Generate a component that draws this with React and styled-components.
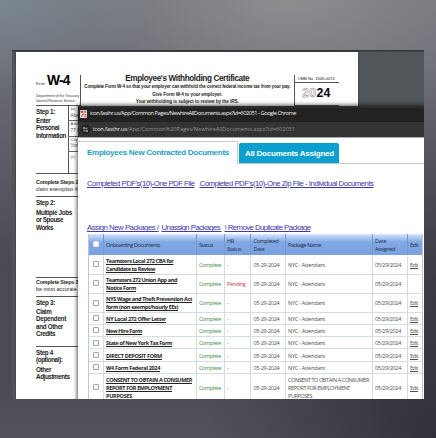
import React, { useLayoutEffect, useRef, useState } from "react";
import styled, { createGlobalStyle, css } from "styled-components";

const Global = createGlobalStyle`
  * { box-sizing: border-box; }
  html, body { margin: 0; padding: 0; }
  body { font-family: "Liberation Sans", Arial, sans-serif; color: #1c1c1c; overflow: hidden; }
`;

const Backdrop = styled.main`
  width: 436px;
  height: 438px;
  padding: 50px 12px 39px;
  overflow: hidden;
  background:
    radial-gradient(ellipse 210px 130px at 290px 0, rgba(157, 157, 156, 0.6), transparent),
    radial-gradient(ellipse 150px 90px at 0 0, rgba(128, 146, 156, 0.6), transparent),
    radial-gradient(ellipse 230px 170px at 436px 438px, rgba(40, 39, 49, 0.75), transparent),
    radial-gradient(ellipse 90px 200px at 436px 290px, rgba(50, 48, 59, 0.6), transparent),
    linear-gradient(180deg, #74767d 0, #6d6e77 60px, #5d5e69 150px, #4a4a55 260px, #4b4a55 380px, #53535d 438px);
`;

const Viewer = styled.section`
  position: relative;
  height: 349px;
  padding: 2px 0 0 4px;
  overflow: hidden;
  background: linear-gradient(#35383b 0, #35383b 1px, #50565a 2px);
`;

const Paper = styled.article`
  width: 342px;
  height: 347px;
  padding: 23px 20px 0;
  background: #fff;
  box-shadow: 0 0 2px #333;
`;

const Text = styled.span`
  display: block;
  width: max-content;
  white-space: pre;
  font-family: ${(p) => p.$font || "inherit"};
  font-size: ${(p) => p.$size}px;
  font-weight: ${(p) => (p.$bold ? 700 : 400)};
  line-height: ${(p) => p.$lh || 7.3}px;
  margin-top: ${(p) => p.$mt || 0}px;
  color: ${(p) => p.$color || "inherit"};
  ${(p) => p.$underline && css`text-decoration: underline; text-decoration-thickness: 0.7px; text-underline-offset: 1px;`}
`;

// Tracks a line of text so that it spans the given measure.
function Fit({ w, children, ...rest }) {
  const ref = useRef(null);
  const [tracking, setTracking] = useState(0);
  useLayoutEffect(() => {
    if (!w) return;
    const natural = ref.current.getBoundingClientRect().width;
    setTracking((w - natural) / children.length);
  }, []);
  return (
    <Text ref={ref} style={{ letterSpacing: `${tracking}px` }} {...rest}>
      {children}
    </Text>
  );
}

const FormHead = styled.header`
  display: grid;
  grid-template-columns: 45px 212.5px 45px;
  height: 31px;
`;
const FormName = styled.div`
  border-right: 1px solid #555;
  border-bottom: 1px solid #555;
`;
const NameRow = styled.div`
  display: flex;
  align-items: flex-end;
  gap: 2px;
  height: 19px;
  padding-bottom: 8px;
`;
const FormTitle = styled.div`
  display: flex;
  flex-direction: column;
  align-items: center;
`;
const FormYear = styled.div`
  border-left: 1px solid #555;
  border-bottom: 1px solid #555;
`;
const Omb = styled.div`
  height: 8px;
  padding-left: 3px;
  border-bottom: 1px solid #555;
`;
const Year = styled.div`
  display: flex;
  align-items: center;
  height: 21px;
  padding-left: 7.5px;
  font-size: 12.3px;
  font-weight: 700;
  line-height: 21px;
  letter-spacing: 0.35px;
  color: #000;
`;
const Outline = styled.span`
  color: #fff;
  -webkit-text-stroke: 0.45px #777;
`;
const Step = styled.section`
  width: 302px;
  height: ${(p) => p.$h}px;
  border-bottom: ${(p) => (p.$open ? "none" : "1px solid #555")};
  padding-top: ${(p) => p.$pt || 2}px;
`;
const StepOne = styled(Step)`
  display: grid;
  grid-template-columns: 32px 1fr;
  padding-top: 0;
`;
const Labels = styled.div`
  padding-top: 1.5px;
`;
const Fields = styled.div`
  border-left: 1px solid #555;
`;
const Field = styled.div`
  height: 15.3px;
  padding-left: 1.5px;
  border-bottom: ${(p) => (p.$last ? "none" : "1px solid #666")};
`;

const Popup = styled.section`
  position: absolute;
  left: 66px;
  top: 56px;
  width: 346px;
  height: 293px;
  overflow: hidden;
  background: #fff;
`;
const PopupShadow = styled.div`
  position: absolute;
  left: 66px;
  top: 56px;
  width: 346px;
  height: 310px;
  box-shadow: 0 0 4px 1px rgba(0, 0, 0, 0.65);
`;
const TitleBar = styled.div`
  display: flex;
  align-items: center;
  gap: 3px;
  height: 16px;
  padding: 0 0 0 2px;
  background: linear-gradient(#303030 0, #222 3px);
`;
const AddressBar = styled.div`
  display: flex;
  align-items: center;
  gap: 3px;
  height: 15px;
  padding-left: 3px;
  background: #333;
`;
const AddressText = styled.div`
  display: flex;
`;
const Tabs = styled.nav`
  display: flex;
  align-items: flex-end;
  height: 27px;
  padding-top: 4px;
  border-top: 1px solid #aaa;
  background: #fff;
`;
const TabActive = styled.div`
  display: flex;
  align-items: center;
  width: 160px;
  height: 23px;
  padding-left: 9px;
  border: solid #c4c7ca;
  border-width: 1px 1px 0 0;
  border-radius: 0 2px 0 0;
`;
const TabRest = styled.div`
  flex: 1;
  height: 23px;
  padding: 2px 0 0 1px;
  border-bottom: 1px solid #c4c7ca;
`;
const TabBlue = styled.div`
  display: flex;
  align-items: center;
  width: 100px;
  height: 20px;
  padding: 1px 0 0 6px;
  border-radius: 2px 2px 0 0;
  background: #0a9fcf;
`;
const Links = styled.div`
  display: flex;
  gap: ${(p) => p.$gap}px;
  margin: ${(p) => p.$mt}px 0 0 9px;
  height: 10px;
`;
const Table = styled.div`
  width: 335px;
  margin: 1px 0 0 9.5px;
  border-left: 1px solid #b9c7d9;
  border-right: 1px solid #b9c7d9;
  font-family: "Open Sans", "Noto Sans", sans-serif;
`;
const Row = styled.div`
  display: grid;
  grid-template-columns: 15px 93px 28px 26.5px 34.5px 87px 35px 1fr;
  height: ${(p) => p.$h}px;
  color: #505050;
  ${(p) => p.$head && css`
    color: #1d2c49;
    background: linear-gradient(#dce8fb 0, #b5cdf4 3px, #82a9e4 8px, #7aa1df 100%);
  `}
`;
const Cell = styled.div`
  display: flex;
  flex-direction: column;
  justify-content: center;
  align-items: ${(p) => (p.$center ? "center" : "flex-start")};
  padding-left: ${(p) => (p.$center ? 0 : 2.5)}px;
  padding-top: ${(p) => (p.$center ? 1.5 : 3)}px;
  min-width: 0;
  border-right: 1px solid ${(p) => (p.$head ? "#709bd0" : "#d3dde1")};
  border-bottom: 1px solid ${(p) => (p.$head ? "#7aa1df" : "#d5dfe2")};
  &:last-child { border-right: 0; }
`;
const Check = styled.span`
  width: 6px;
  height: 6px;
  border: 1px solid ${(p) => (p.$head ? "#e4e4e4" : "#a2a2a2")};
  border-radius: 1px;
  background: #fff;
  margin-top: -2px;
`;

const Favicon = () => (
  <svg width="7" height="8" viewBox="0 0 7 8">
    <rect width="7" height="8" rx="0.7" fill="#e9ddd8" />
    <rect x="0.5" y="0.8" width="2.5" height="2" fill="#c44b3d" />
    <rect x="3.7" y="0.8" width="2.5" height="2" fill="#9a8a86" />
    <path d="M1 7L3 3.6L4.2 5.2L6 4.2" stroke="#d0553e" strokeWidth="1" fill="none" />
    <rect x="4.4" y="5.5" width="2" height="1.7" fill="#d9765c" />
  </svg>
);
const SiteIcon = () => (
  <svg width="9" height="9" viewBox="0 0 9 9">
    <circle cx="4.5" cy="4.5" r="4.5" fill="#1f1f1f" />
    <path d="M4.1 3.2H6.6M2.2 5.9H4.7" stroke="#ddd" strokeWidth="0.8" />
    <circle cx="2.9" cy="3.2" r="0.8" fill="none" stroke="#ddd" strokeWidth="0.7" />
    <circle cx="5.9" cy="5.9" r="0.8" fill="none" stroke="#ddd" strokeWidth="0.7" />
  </svg>
);

const HEAD = [
  [["Onboarding Documents", 54]],
  [["Status", 14]],
  [["HR", 7], ["Status", 14]],
  [["Completed", 25], ["Date", 11]],
  [["Package Name", 33]],
  [["Date", 11], ["Assigned", 20]],
  [["Edit", 8.5]],
];

const NYC = [["NYC - Attendant", 37]];
const ROWS = [
  { h: 19, doc: [["Teamsters Local 272 CBA for", 67.5], ["Candidate to Review", 49]] },
  { h: 19.5, doc: [["Teamsters 272 Union App and", 71], ["Notice Form", 30]], hr: "Pending", noEdit: true },
  { h: 19, doc: [["NYS Wage and Theft Prevention Act", 86], ["form (non exempt/hourly EEs)", 72]] },
  { h: 12.5, doc: [["NY Local 272 Offer Letter", 60]] },
  { h: 12.2, doc: [["New Hire Form", 36]] },
  { h: 12.3, doc: [["State of New York Tax Form", 66]] },
  { h: 12.3, doc: [["DIRECT DEPOSIT FORM", 56]] },
  { h: 12.3, doc: [["W4 Form Federal 2024", 54]] },
  {
    h: 27,
    doc: [["CONSENT TO OBTAIN A CONSUMER", 86], ["REPORT FOR EMPLOYMENT", 66], ["PURPOSES", 26]],
    pkg: [["CONSENT TO OBTAIN A CONSUMER", 81], ["REPORT FOR EMPLOYMENT", 62], ["PURPOSES", 24]],
  },
];

const Lines = ({ items, ...rest }) =>
  items.map(([text, w]) => (
    <Fit key={text} w={w} $size={5.5} $lh={7.8} {...rest}>{text}</Fit>
  ));

const label = { $size: 6.3, $bold: true, $lh: 7.4 };
const tiny = { $size: 4, $lh: 6.8, $color: "#555" };
const link = { $size: 7.8, $lh: 10, $color: "#3f38a8", $underline: true };

export default function App() {
  return (
    <>
      <Global />
      <Backdrop>
        <Viewer>
          <Paper>
            <FormHead>
              <FormName>
                <NameRow>
                  <Fit w={9} $size={3.5} $lh={4}>Form</Fit>
                  <Fit w={22.5} $size={13.8} $bold $lh={11} $color="#000">W-4</Fit>
                </NameRow>
                <Fit w={43} $size={3.8} $lh={5.2} $color="#444">Department of the Treasury</Fit>
                <Fit w={39} $size={3.8} $lh={5.2} $color="#444">Internal Revenue Service</Fit>
              </FormName>
              <FormTitle>
                <Fit w={124} $size={8.2} $bold $lh={8}>Employee's Withholding Certificate</Fit>
                <Fit w={206} $size={4.6} $bold $lh={7.5}>Complete Form W-4 so that your employer can withhold the correct federal income tax from your pay.</Fit>
                <Fit w={70} $size={4.6} $bold $lh={7.5}>Give Form W-4 to your employer.</Fit>
                <Fit w={103} $size={4.6} $bold $lh={7.5}>Your withholding is subject to review by the IRS.</Fit>
              </FormTitle>
              <FormYear>
                <Omb><Fit w={37} $size={4.2} $lh={7.5}>OMB No. 1545-0074</Fit></Omb>
                <Year><Outline>20</Outline><span>24</span></Year>
              </FormYear>
            </FormHead>
            <StepOne $h={68}>
              <Labels>
                <Fit w={19} {...label}>Step 1:</Fit>
                <Fit w={14.5} {...label} $mt={2}>Enter</Fit>
                <Fit w={23} {...label}>Personal</Fit>
                <Fit w={30} {...label}>Information</Fit>
              </Labels>
              <Fields>
                <Field><Text {...tiny}>(a)</Text><Text {...tiny} $size={4.6}>Abel</Text></Field>
                <Field><Text {...tiny}>Addr</Text><Text {...tiny} $size={4.6}>77 La</Text></Field>
                <Field><Text {...tiny}>City o</Text><Text {...tiny} $size={4.6}>York</Text></Field>
                <Field $last><Text {...tiny} $lh={9}>(c)</Text></Field>
              </Fields>
            </StepOne>
            <Step $h={23} $pt={5}>
              <Fit w={45} $size={5.4} $bold $lh={7}>Complete Steps 2–</Fit>
              <Fit w={45} $size={5.2} $lh={7}>claim exemption fro</Fit>
            </Step>
            <Step $h={81}>
              <Fit w={19} {...label}>Step 2:</Fit>
              <Fit w={36} {...label} $mt={2.3}>Multiple Jobs</Fit>
              <Fit w={27} {...label}>or Spouse</Fit>
              <Fit w={17} {...label}>Works</Fit>
            </Step>
          </Paper>
          <LowerForm />
          <PopupShadow />
          <Popup>
            <TitleBar>
              <Favicon />
              <Fit w={206} $size={5.7} $font={'"Open Sans", sans-serif'} $color="#eee">icon.fasthr.us/App/Common Pages/NewhireAllDocuments.aspx?id=602051 - Google Chrome</Fit>
            </TitleBar>
            <AddressBar>
              <SiteIcon />
              <AddressText>
                <Fit w={34} $size={5.7} $font={'"Open Sans", sans-serif'} $color="#eee">icon.fasthr.us</Fit>
                <Fit w={168} $size={5.7} $font={'"Open Sans", sans-serif'} $color="#929292">/App/Common%20Pages/NewhireAllDocuments.aspx?id=602051</Fit>
              </AddressText>
            </AddressBar>
            <Tabs>
              <TabActive><Fit w={142} $size={8} $bold $lh={10} $color="#1e9fc0">Employees New Contracted Documents</Fit></TabActive>
              <TabRest><TabBlue><Fit w={89} $size={8} $bold $lh={10} $color="#fff">All Documents Assigned</Fit></TabBlue></TabRest>
            </Tabs>
            <Links $mt={14.5} $gap={5}>
              <Fit w={107.5} {...link}>Completed PDF's(10)-One PDF File</Fit>
              <Fit w={174} {...link}>Completed PDF's(10)-One Zip File - Individual Documents</Fit>
            </Links>
            <Links $mt={34.8} $gap={3}>
              <Fit w={71.5} {...link}>Assign New Packages /</Fit>
              <Fit w={60} {...link}>Unassign Packages </Fit>
              <Fit w={86} {...link}>! Remove Duplicate Package</Fit>
            </Links>
            <Table>
              <Row $head $h={20.7}>
                <Cell $center $head><Check $head /></Cell>
                {HEAD.map((items, i) => <Cell $head key={i}><Lines items={items} /></Cell>)}
              </Row>
              {ROWS.map((r) => (
                <Row key={r.doc[0][0]} $h={r.h}>
                  <Cell $center><Check /></Cell>
                  <Cell><Lines items={r.doc} $bold $underline $color="#222" /></Cell>
                  <Cell><Lines items={[["Complete", 22]]} $color="#3b9142" /></Cell>
                  <Cell><Lines items={r.hr ? [[r.hr, 18.5]] : [["-", 0]]} $color={r.hr ? "#d83a42" : undefined} /></Cell>
                  <Cell><Lines items={[["05-29-2024", 26]]} /></Cell>
                  <Cell><Lines items={r.pkg || NYC} /></Cell>
                  <Cell><Lines items={[["05/29/2024", 26]]} /></Cell>
                  <Cell>{!r.noEdit && <Lines items={[["Edit", 8]]} $underline />}</Cell>
                </Row>
              ))}
            </Table>
          </Popup>
        </Viewer>
      </Backdrop>
    </>
  );
}

const Lower = styled.div`
  margin: -121px 0 0 20px;
`;

function LowerForm() {
  return (
    <Lower>
      <Step $h={18.5} $pt={1}>
        <Fit w={45} $size={5.4} $bold $lh={7}>Complete Steps 3–</Fit>
        <Fit w={45} $size={5.2} $lh={7}>be most accurate if</Fit>
      </Step>
      <Step $h={50}>
        <Fit w={19} {...label}>Step 3:</Fit>
        <Fit w={15.5} {...label} $mt={2}>Claim</Fit>
        <Fit w={30} {...label}>Dependent</Fit>
        <Fit w={27} {...label}>and Other</Fit>
        <Fit w={19} {...label}>Credits</Fit>
      </Step>
      <Step $h={53} $open>
        <Fit w={17} {...label}>Step 4</Fit>
        <Fit w={26.5} {...label}>(optional):</Fit>
        <Fit w={15} {...label} $mt={2.5}>Other</Fit>
        <Fit w={33.5} {...label}>Adjustments</Fit>
      </Step>
    </Lower>
  );
}
